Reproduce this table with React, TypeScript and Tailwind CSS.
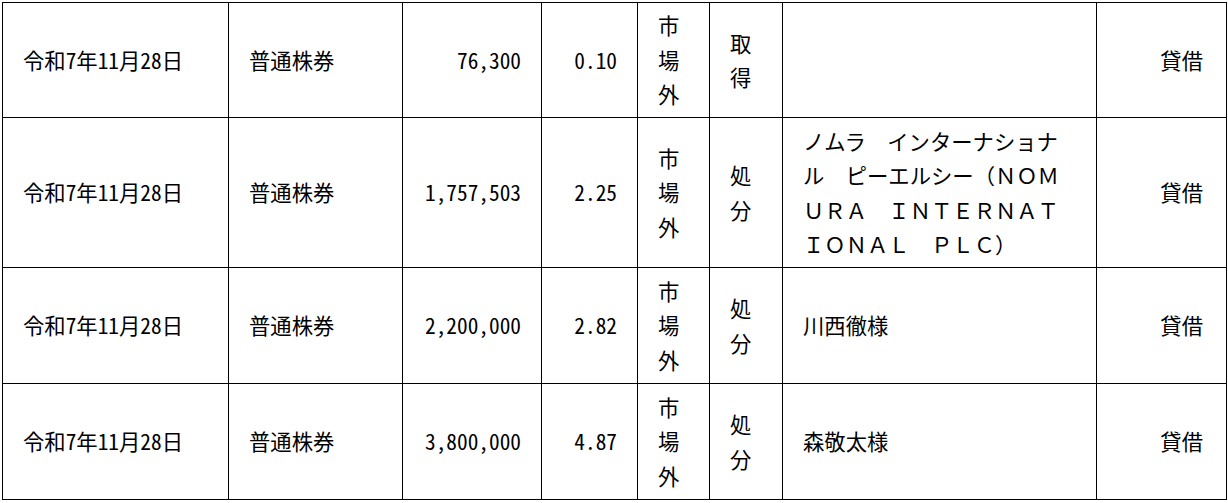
const rows = [
  {
    date: '令和7年11月28日',
    kind: '普通株券',
    qty: '76,300',
    pct: '0.10',
    place: ['市', '場', '外'],
    action: ['取', '得'],
    party: [] as string[],
    note: '貸借',
    h: 'h-[115px]',
  },
  {
    date: '令和7年11月28日',
    kind: '普通株券',
    qty: '1,757,503',
    pct: '2.25',
    place: ['市', '場', '外'],
    action: ['処', '分'],
    party: [
      'ノムラ　インターナショナ',
      'ル　ピーエルシー（ＮＯＭ',
      'ＵＲＡ　ＩＮＴＥＲＮＡＴ',
      'ＩＯＮＡＬ　ＰＬＣ）',
    ],
    note: '貸借',
    h: 'h-[150px]',
  },
  {
    date: '令和7年11月28日',
    kind: '普通株券',
    qty: '2,200,000',
    pct: '2.82',
    place: ['市', '場', '外'],
    action: ['処', '分'],
    party: ['川西徹様'],
    note: '貸借',
    h: 'h-[116px]',
  },
  {
    date: '令和7年11月28日',
    kind: '普通株券',
    qty: '3,800,000',
    pct: '4.87',
    place: ['市', '場', '外'],
    action: ['処', '分'],
    party: ['森敬太様'],
    note: '貸借',
    h: 'h-[116px]',
  },
]

const cell = 'border border-black align-middle px-5 py-0'
const half = "[font-feature-settings:'hwid']"

export default function App() {
  return (
    <main className="min-h-screen bg-white pl-[2px] pt-[2px] font-['Noto_Sans_CJK_JP',sans-serif] text-[21.33px] leading-[34.5px] text-black">
      <table className="w-[1224px] table-fixed border-collapse">
        <colgroup>
          <col className="w-[226px]" />
          <col className="w-[174px]" />
          <col className="w-[139px]" />
          <col className="w-[96px]" />
          <col className="w-[72px]" />
          <col className="w-[73px]" />
          <col className="w-[314px]" />
          <col className="w-[130px]" />
        </colgroup>
        <tbody>
          {rows.map((r, i) => (
            <tr key={i} className={r.h}>
              <td className={`${cell} ${half}`}>{r.date}</td>
              <td className={cell}>{r.kind}</td>
              <td className={`${cell} ${half} text-right`}>{r.qty}</td>
              <td className={`${cell} ${half} text-right`}>{r.pct}</td>
              <td className={cell}>
                {r.place.map((c) => (
                  <div key={c}>{c}</div>
                ))}
              </td>
              <td className={cell}>
                {r.action.map((c) => (
                  <div key={c}>{c}</div>
                ))}
              </td>
              <td className={cell}>
                {r.party.map((l) => (
                  <div key={l} className="whitespace-nowrap">{l}</div>
                ))}
              </td>
              <td className={`${cell} pr-[23px] text-right`}>{r.note}</td>
            </tr>
          ))}
        </tbody>
      </table>
    </main>
  )
}
